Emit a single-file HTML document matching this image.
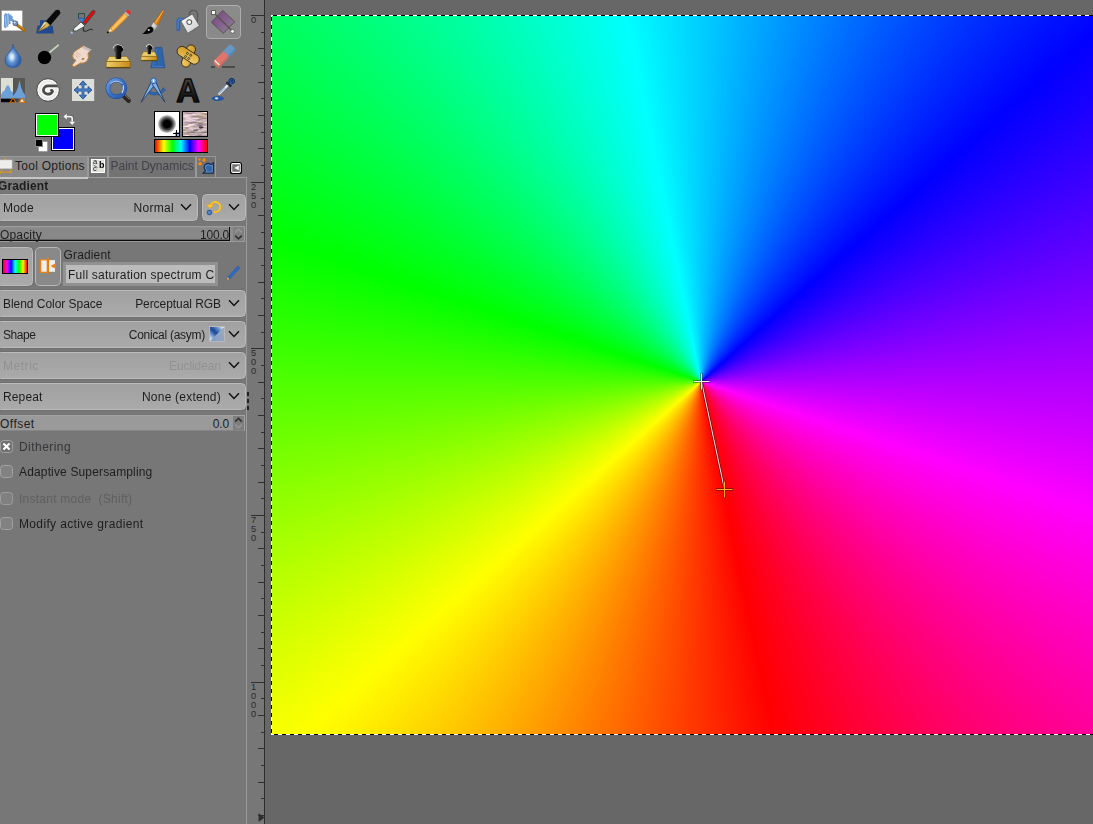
<!DOCTYPE html>
<html>
<head>
<meta charset="utf-8">
<title>GIMP</title>
<style>
html,body{margin:0;padding:0;}
body{width:1093px;height:824px;overflow:hidden;background:#777777;position:relative;font-family:"Liberation Sans","DejaVu Sans",sans-serif;font-size:12px;color:#1e1e1e;}
.abs{position:absolute;}
#canvasbg{left:265px;top:0;width:828px;height:824px;background:#676767;}
#rulerline{left:264px;top:0;width:1px;height:824px;background:#2e2e2e;}
#img{left:272px;top:16px;width:821px;height:718px;background:conic-gradient(from 168.4deg at 429px 365.5px,#ff0000,#ffff00,#00ff00,#00ffff,#0000ff,#ff00ff,#ff0000);}
#selT{left:271px;top:15px;width:822px;height:1px;background:repeating-linear-gradient(90deg,#fff 0 2px,#000 2px 6px,#fff 6px 8px);}
#selB{left:271px;top:734px;width:822px;height:1px;background:repeating-linear-gradient(90deg,#fff 0 3px,#000 3px 7px,#fff 7px 8px);}
#selL{left:271px;top:15px;width:1px;height:720px;background:repeating-linear-gradient(180deg,#fff 0 2px,#000 2px 6px,#fff 6px 8px);}
.tick{position:absolute;height:1px;background:#2e2e2e;}
.rl{position:absolute;left:249px;width:9px;font-size:9.4px;line-height:9px;color:#2a2a2a;text-align:center;}
.btn{position:absolute;height:27px;border-radius:4.5px;background:linear-gradient(#a1a1a1,#aaaaaa);border:1px solid #bbbbbb;box-shadow:0 0 0 1px rgba(0,0,0,0.05);box-sizing:border-box;}
.btn .l{position:absolute;left:3px;top:0;line-height:26px;white-space:nowrap;}
.btn .r{position:absolute;top:0;line-height:26px;white-space:nowrap;text-align:right;}
.dis{color:#919191;}
.chev{position:absolute;width:12px;height:8px;}
.cb{position:absolute;left:0;width:13px;height:13px;border-radius:3.5px;background:#828282;border:1px solid #a2a2a2;box-sizing:border-box;}
.cbl{position:absolute;left:19px;white-space:nowrap;line-height:14px;}
.spin{position:absolute;left:0;width:245px;height:16px;background:#8a8a8a;box-sizing:border-box;border-top:1px solid #6e6e6e;}
</style>
</head>
<body>
<!-- canvas area -->
<div id="canvasbg" class="abs"></div>
<div id="rulerline" class="abs"></div>
<div id="img" class="abs"></div>
<div id="selT" class="abs"></div>
<div id="selB" class="abs"></div>
<div id="selL" class="abs"></div>
<!-- gradient tool line -->
<svg class="abs" style="left:680px;top:360px" width="70" height="150" viewBox="680 360 70 150">
<line x1="701.5" y1="381.5" x2="724.5" y2="489.5" stroke="#000" stroke-width="2.4" opacity="0.55"/>
<line x1="701.5" y1="381.5" x2="724.5" y2="489.5" stroke="#e6e6e6" stroke-width="1.1"/>
<path d="M693 381.5H710M701.5 373V390" stroke="#000" stroke-width="2.6" opacity="0.5" fill="none"/>
<path d="M693.5 381.5H709.5M701.5 373.5V389.5" stroke="#f2f2f2" stroke-width="1.2" fill="none"/>
<path d="M716 489.5H733M724.5 481V498" stroke="#000" stroke-width="2.6" opacity="0.5" fill="none"/>
<path d="M716.5 489.5H732.5M724.5 481.5V497.5" stroke="#ffb020" stroke-width="1.2" fill="none"/>
</svg>
<!-- RULER -->
<div id="ruler">
<i class="tick" style="left:251px;top:15px;width:13px"></i>
<i class="tick" style="left:261px;top:32px;width:3px"></i>
<i class="tick" style="left:258px;top:48px;width:6px"></i>
<i class="tick" style="left:261px;top:65px;width:3px"></i>
<i class="tick" style="left:258px;top:82px;width:6px"></i>
<i class="tick" style="left:261px;top:98px;width:3px"></i>
<i class="tick" style="left:258px;top:115px;width:6px"></i>
<i class="tick" style="left:261px;top:132px;width:3px"></i>
<i class="tick" style="left:258px;top:148px;width:6px"></i>
<i class="tick" style="left:261px;top:165px;width:3px"></i>
<i class="tick" style="left:251px;top:182px;width:13px"></i>
<i class="tick" style="left:261px;top:198px;width:3px"></i>
<i class="tick" style="left:258px;top:215px;width:6px"></i>
<i class="tick" style="left:261px;top:232px;width:3px"></i>
<i class="tick" style="left:258px;top:248px;width:6px"></i>
<i class="tick" style="left:261px;top:265px;width:3px"></i>
<i class="tick" style="left:258px;top:282px;width:6px"></i>
<i class="tick" style="left:261px;top:298px;width:3px"></i>
<i class="tick" style="left:258px;top:315px;width:6px"></i>
<i class="tick" style="left:261px;top:332px;width:3px"></i>
<i class="tick" style="left:251px;top:348px;width:13px"></i>
<i class="tick" style="left:261px;top:365px;width:3px"></i>
<i class="tick" style="left:258px;top:382px;width:6px"></i>
<i class="tick" style="left:261px;top:398px;width:3px"></i>
<i class="tick" style="left:258px;top:415px;width:6px"></i>
<i class="tick" style="left:261px;top:432px;width:3px"></i>
<i class="tick" style="left:258px;top:448px;width:6px"></i>
<i class="tick" style="left:261px;top:465px;width:3px"></i>
<i class="tick" style="left:258px;top:482px;width:6px"></i>
<i class="tick" style="left:261px;top:498px;width:3px"></i>
<i class="tick" style="left:251px;top:515px;width:13px"></i>
<i class="tick" style="left:261px;top:532px;width:3px"></i>
<i class="tick" style="left:258px;top:548px;width:6px"></i>
<i class="tick" style="left:261px;top:565px;width:3px"></i>
<i class="tick" style="left:258px;top:582px;width:6px"></i>
<i class="tick" style="left:261px;top:598px;width:3px"></i>
<i class="tick" style="left:258px;top:615px;width:6px"></i>
<i class="tick" style="left:261px;top:632px;width:3px"></i>
<i class="tick" style="left:258px;top:648px;width:6px"></i>
<i class="tick" style="left:261px;top:665px;width:3px"></i>
<i class="tick" style="left:251px;top:682px;width:13px"></i>
<i class="tick" style="left:261px;top:698px;width:3px"></i>
<i class="tick" style="left:258px;top:715px;width:6px"></i>
<i class="tick" style="left:261px;top:732px;width:3px"></i>
<i class="tick" style="left:258px;top:748px;width:6px"></i>
<i class="tick" style="left:261px;top:765px;width:3px"></i>
<i class="tick" style="left:258px;top:782px;width:6px"></i>
<i class="tick" style="left:261px;top:798px;width:3px"></i>
<i class="tick" style="left:258px;top:815px;width:6px"></i>
<div class="rl" style="top:15px">0</div>
<div class="rl" style="top:182px">2<br>5<br>0</div>
<div class="rl" style="top:348px">5<br>0<br>0</div>
<div class="rl" style="top:515px">7<br>5<br>0</div>
<div class="rl" style="top:682px">1<br>0<br>0<br>0</div>
<svg class="abs" style="left:256px;top:812px" width="9" height="12" viewBox="0 0 9 12"><path d="M2.6 1.2L8.6 5.6L2.6 10Z" fill="#2e2e2e"/></svg>
</div>
<!-- LEFT PANEL -->
<div id="panel" class="abs" style="left:0;top:0;width:249px;height:824px;overflow:hidden;">
<svg class="abs" style="left:0;top:0" width="247" height="110" viewBox="0 0 247 110">
<defs>
<linearGradient id="gPurple" x1="0" y1="0" x2="1" y2="1"><stop offset="0" stop-color="#75407f"/><stop offset="1" stop-color="#93839a"/></linearGradient>
<linearGradient id="gGold" x1="0" y1="0" x2="1" y2="0"><stop offset="0" stop-color="#edcf6a"/><stop offset="1" stop-color="#c98a14"/></linearGradient>
<linearGradient id="gGold2" x1="0" y1="0" x2="1" y2="1"><stop offset="0" stop-color="#d2961f"/><stop offset="1" stop-color="#f0d070"/></linearGradient>
<linearGradient id="gPencil" x1="0" y1="0" x2="1" y2="1"><stop offset="0" stop-color="#e88a10"/><stop offset="0.5" stop-color="#fbb64a"/><stop offset="1" stop-color="#e88a10"/></linearGradient>
<radialGradient id="gDrop" cx="0.42" cy="0.55" r="0.6"><stop offset="0" stop-color="#eaf4ff"/><stop offset="0.16" stop-color="#cfe4fb"/><stop offset="0.42" stop-color="#6596d4"/><stop offset="0.75" stop-color="#3869ae"/><stop offset="1" stop-color="#2c5894"/></radialGradient>
<linearGradient id="gStampH" x1="0" y1="0" x2="1" y2="0"><stop offset="0" stop-color="#777"/><stop offset="0.45" stop-color="#111"/><stop offset="1" stop-color="#000"/></linearGradient>
<linearGradient id="gFerr" x1="0" y1="0" x2="1" y2="1"><stop offset="0" stop-color="#fff"/><stop offset="1" stop-color="#9a9a9a"/></linearGradient>
<linearGradient id="gBucket" x1="0" y1="0" x2="1" y2="1"><stop offset="0" stop-color="#ffffff"/><stop offset="1" stop-color="#c8c8c8"/></linearGradient>
<linearGradient id="gLev" x1="0" y1="0" x2="1" y2="0"><stop offset="0" stop-color="#000"/><stop offset="0.3" stop-color="#000"/><stop offset="1" stop-color="#888"/></linearGradient>
<linearGradient id="gZoom" x1="0" y1="0" x2="1" y2="1"><stop offset="0" stop-color="#6a9be0"/><stop offset="0.5" stop-color="#3a72c2"/><stop offset="1" stop-color="#2a5aa8"/></linearGradient>
<linearGradient id="gA" x1="0" y1="0" x2="0" y2="1"><stop offset="0" stop-color="#555"/><stop offset="0.5" stop-color="#222"/><stop offset="1" stop-color="#000"/></linearGradient>
<radialGradient id="gBrush"><stop offset="0" stop-color="#000"/><stop offset="0.55" stop-color="#000"/><stop offset="1" stop-color="#000" stop-opacity="0"/></radialGradient>
</defs>

<!-- 1: mypaint brush -->
<g>
<rect x="1.4" y="10.4" width="21.2" height="20.4" fill="#c4c4c4"/>
<rect x="2" y="11" width="20" height="19.2" fill="#fff"/>
<path d="M4.6 14.5V27.5M5.8 13V28.2M7 14V26.5M8.3 13.2V25M9.6 15V24M10.8 14.4V21M12 16V20.5" stroke="#5e93d4" stroke-width="1.1" fill="none"/>
<path d="M4.4 19L8 27M6.4 14L10.5 23.5M9 14L12.5 20.5" stroke="#6fa0dc" stroke-width="1" fill="none" opacity="0.9"/>
<path d="M5.2 16.5L6.2 26M7.6 15L8.6 24.5" stroke="#fff" stroke-width="0.5" fill="none" opacity="0.8"/>
<path d="M17.4 25.2L24.3 30.2" stroke="#a96606" stroke-width="3" stroke-linecap="round"/>
<path d="M17.6 24.6L24.2 29.4" stroke="#d9a04a" stroke-width="0.8"/>
<path d="M11.8 19.6L15 22.5" stroke="#6c9bd6" stroke-width="2.6" stroke-linecap="round"/>
<ellipse cx="15.4" cy="23.4" rx="2.5" ry="2.4" fill="#6d8db5" stroke="#3d4f66" stroke-width="0.7"/>
<circle cx="14.6" cy="22.6" r="1" fill="#dfe9f6"/>
</g>

<!-- 2: ink -->
<g>
<path d="M40 20.2H46.6V25.6H52.6L53.8 33.6H36.1L37.6 25.6H40Z" fill="#20498f"/>
<path d="M45.6 21.6L55.4 10.6Q57.8 8.8 59.6 10.6Q61 12.6 59.6 14.6L50.2 25.4Z" fill="#0a0a0a"/>
<path d="M49.6 15.4L55.6 9.6" stroke="#666" stroke-width="0.7" opacity="0.55"/>
<path d="M38.2 31.6L44.4 22L46.6 21.8L49.8 25L47.6 27.2Z" fill="#d3b25e" stroke="#7a5f1d" stroke-width="0.5"/>
<path d="M38.4 31.4L45.2 25" stroke="#5a4410" stroke-width="0.6"/>
<path d="M39.6 29.6L44.4 22.2L46.2 22.2Z" fill="#f4e7b8"/>
</g>

<!-- 3: airbrush -->
<g>
<path d="M83.4 26V31Q86.6 32 89.4 29.6Q91.4 28.6 92.8 30" stroke="#1a1a1a" stroke-width="1" fill="none" opacity="0.9"/>
<rect x="78.5" y="13.6" width="6" height="4.8" fill="#777" stroke="#2e4a4c" stroke-width="1"/>
<path d="M78.6 18.2H84.6L82 22.8Z" fill="#3b7fd6" stroke="#2a5aa0" stroke-width="0.5"/>
<path d="M82.6 22.6L92.4 10.6Q94.2 9.6 95 11.4Q95.2 12.4 94.6 13L85.4 24.6Z" fill="#f00606" stroke="#2e4a4c" stroke-width="0.9"/>
<path d="M81 22L85 26L83.2 27.2L76.4 31L73.4 31L73.8 28.4Z" fill="#f2f2ee" stroke="#2e4a4c" stroke-width="0.9" stroke-linejoin="round"/>
<path d="M73.6 30.8L72.2 31.8" stroke="#2e4a4c" stroke-width="0.9"/>
<rect x="70.8" y="31.6" width="2" height="2" fill="#a8c6ea"/>
</g>

<!-- 4: pencil -->
<g>
<path d="M110.2 28.2L124.2 13.2L128 16.6L113.2 31.2Z" fill="url(#gPencil)" stroke="#c7720a" stroke-width="0.6"/>
<path d="M111.8 29.6L126 15" stroke="#fde0a8" stroke-width="0.8" opacity="0.8"/>
<path d="M110.2 28.2L107.3 32.8L113.2 31.2Z" fill="#f3dcb0" stroke="#c7720a" stroke-width="0.5"/>
<path d="M107.3 32.8L108.2 31.2L109.2 32.3Z" fill="#000"/>
<circle cx="107.7" cy="32.4" r="0.8" fill="#000"/>
<path d="M124.2 13.2L125.8 11.6L129.6 15L128 16.6Z" fill="#b9b9b3"/>
<path d="M125.8 11.6Q127.4 9.2 129.6 10.4Q131.6 12.3 129.6 15Z" fill="#ee2a2a"/>
</g>

<!-- 5: paintbrush -->
<g>
<path d="M153.6 22.4L163 10Q164.4 9.6 164.2 11L157.6 26Z" fill="#e2830f" stroke="#a85d05" stroke-width="0.5"/>
<path d="M155.2 23.4L163.2 10.8" stroke="#f7b560" stroke-width="0.9"/>
<path d="M157 24.6L163.6 11.4" stroke="#b36205" stroke-width="0.7" opacity="0.7"/>
<path d="M150.8 26.8L153.6 22.4L157.6 26L154.6 30Z" fill="url(#gFerr)" stroke="#8a8a8a" stroke-width="0.4"/>
<path d="M142.2 34Q146.5 30.5 147.4 28.2Q149.6 25.6 151.8 26.8Q154.4 28.6 152.8 31.4Q150 34.2 142.2 34Z" fill="#050505"/>
<circle cx="148.7" cy="30" r="1.1" fill="#cfcfcf"/>
</g>

<!-- 6: bucket fill -->
<g>
<path d="M178.3 29.3V21.3Q178.3 19.6 180 19.6H186" stroke="#2f62ad" stroke-width="3.8" fill="none" stroke-linecap="round"/>
<path d="M178 29V21.3Q178 19.3 180 19.3H185" stroke="#4d82cc" stroke-width="1.2" fill="none" stroke-linecap="round"/>
<path d="M189.4 17V13.5Q189.8 10.4 193.4 10.4Q197.2 10.4 197.5 14V22" stroke="#565a56" stroke-width="1.3" fill="none"/>
<path d="M192.3 14L199.6 25.8L187.7 33.4L180.8 21Z" fill="url(#gBucket)" stroke="#5e5e5e" stroke-width="0.9" stroke-linejoin="round"/>
<circle cx="189.3" cy="22.1" r="2.4" fill="#f4f4f4" stroke="#5c605c" stroke-width="1.1"/>
</g>

<!-- 7: gradient (active) -->
<g>
<rect x="206.5" y="5.5" width="34" height="33" rx="3.5" fill="#8a8a8a" stroke="#adadad" stroke-width="1"/>
<path d="M222.7 10.4L234.7 21.8L223.3 33.4L211.4 22.2Z" fill="url(#gPurple)" stroke="#55534f" stroke-width="1" stroke-linejoin="round"/>
<path d="M214 13L232.3 31" stroke="#55534f" stroke-width="1.1"/>
<rect x="211.6" y="10.6" width="3.8" height="3.8" fill="#fff" stroke="#4a4a48" stroke-width="0.8"/>
<circle cx="232.5" cy="31.3" r="1.9" fill="#fff" stroke="#4a4a48" stroke-width="0.7"/>
</g>

<!-- row 2 -->
<!-- 8: blur drop -->
<g>
<path d="M13.1 44Q13.4 48.5 17.2 52.5Q21.4 56.8 21.2 60Q20.8 67.4 13.1 67.4Q5.4 67.4 5 60Q4.9 56.6 9 52.5Q12.8 48.5 13.1 44Z" fill="url(#gDrop)" stroke="#3262a6" stroke-width="1"/>
<path d="M13.1 44.5V47.5" stroke="#4a6a94" stroke-width="1"/>
</g>

<!-- 9: dodge/burn -->
<g>
<path d="M49.8 52.2L58.2 45.2" stroke="#6a7468" stroke-width="2.8" stroke-linecap="round"/>
<path d="M49.8 52.2L58.2 45.2" stroke="#c3cdbd" stroke-width="1.9" stroke-linecap="round"/>
<circle cx="44.5" cy="57.5" r="6.7" fill="#000"/>
</g>

<!-- 10: smudge -->
<g>
<path d="M83.5 45.8L91.3 49.2L88 53.5Q89.6 58.5 86.5 61.5Q83 63.8 80.6 63L74.6 66.6Q72.4 67.2 72.2 65L76 60.2Q73 59.5 72.6 56Q72.8 52 76.5 50.2Q80.5 47.5 83.5 45.8Z" fill="#efd9cd" stroke="#bf7b2b" stroke-width="0.9" stroke-linejoin="round"/>
<path d="M83.5 45.6L91.5 49.2L89.5 51.5L82 48Z" fill="#b9b9b9" opacity="0.85"/>
<path d="M84.5 45.4L91.8 48.8" stroke="#7c7c7c" stroke-width="1.4"/>
<path d="M74.5 54.5L78 58M75.5 52.8L79.5 57M77 51.5L80.8 55.5" stroke="#d89a78" stroke-width="0.6"/>
<path d="M81.5 59.5Q83 57.2 84.6 58.5Q83.5 60.2 81.5 59.5Z" fill="#a8650f"/>
</g>

<!-- 11: clone stamp -->
<g>
<path d="M106.3 67.6H130.2" stroke="#2a2008" stroke-width="1.2"/>
<path d="M109.4 56.4H126.8L130.2 61.7H106.2Z" fill="#ebcf6e" stroke="#7d5b0c" stroke-width="0.6"/>
<rect x="106.2" y="61.7" width="24" height="5.5" fill="url(#gGold)" stroke="#7d5b0c" stroke-width="0.6"/>
<path d="M115.4 58.6V52.5Q112.6 49.5 113.2 47.2Q114.3 44.3 118.2 44.3Q122.4 44.3 123.4 47.4Q123.8 50 121.2 52.6V58.6Q118.3 59.6 115.4 58.6Z" fill="url(#gStampH)"/>
<path d="M113.4 48.5Q113.6 44.8 118 44.6Q122.6 44.6 123.4 48.5" stroke="#e8e8e8" stroke-width="0.9" fill="none"/>
</g>

<!-- 12: perspective clone -->
<g>
<path d="M155.7 47.3H161.8L165 67.8H150.5Z" fill="#2f63aa" stroke="#234f8f" stroke-width="0.6"/>
<path d="M156.8 49L152.6 66.5H163.4" stroke="#5a8bd0" stroke-width="0.7" fill="none" opacity="0.7"/>
<path d="M141.2 60.6H157" stroke="#2a2008" stroke-width="1"/>
<path d="M143.6 51.8H154.6L157 56.3H141Z" fill="#ebcf6e" stroke="#7d5b0c" stroke-width="0.5"/>
<rect x="141" y="56.3" width="16" height="3.9" fill="url(#gGold)" stroke="#7d5b0c" stroke-width="0.5"/>
<path d="M147.6 54V50.2Q145.8 48.2 146.2 46.6Q147 44.4 149.2 44.4Q151.8 44.4 152.6 46.6Q152.9 48.4 150.8 50.4V54Q149.2 54.6 147.6 54Z" fill="url(#gStampH)"/>
<path d="M146.2 47Q146.6 44.6 149.2 44.5Q152 44.6 152.8 47.6" stroke="#e8e8e8" stroke-width="0.9" fill="none"/>
</g>

<!-- 13: heal -->
<g>
<g transform="rotate(111 188.5 56)"><rect x="177" y="51.6" width="23" height="8.8" rx="4.3" fill="url(#gGold2)" stroke="#2c2209" stroke-width="0.8"/></g>
<g transform="rotate(33 188.2 55.3)"><rect x="176" y="50.5" width="24.4" height="9.6" rx="4.6" fill="url(#gGold2)" stroke="#2c2209" stroke-width="0.8"/></g>
<circle cx="187.4" cy="53.4" r="1" fill="#b9b39a" stroke="#2c2209" stroke-width="0.7"/>
<circle cx="190.7" cy="55.3" r="1" fill="#b9b39a" stroke="#2c2209" stroke-width="0.7"/>
<circle cx="185.5" cy="56.6" r="1" fill="#b9b39a" stroke="#2c2209" stroke-width="0.7"/>
<circle cx="188.7" cy="58.5" r="1" fill="#b9b39a" stroke="#2c2209" stroke-width="0.7"/>
</g>

<!-- 14: eraser -->
<g>
<rect x="211" y="66" width="4" height="2" fill="#4b4d47"/>
<rect x="222" y="66" width="13" height="2" fill="#4b4d47"/>
<path d="M223.4 51L230.2 44L235.2 48.6L235 51.2L228.3 57.8Z" fill="#6699c6"/>
<path d="M235.2 48.6L235 51.2L228.3 57.8L228.1 55.6Z" fill="#5585b3"/>
<path d="M223.4 51L228.1 55.6L228.3 57.8L218.6 67.9L213.9 63.8L214.2 60.6Z" fill="#df766b"/>
<path d="M228.1 55.6L228.3 57.8L218.6 67.9L218.8 65.4Z" fill="#cf6a60"/>
<path d="M215 59.8L219.9 64.4L219 65.6L214.4 61.2Z" fill="#f3e9df"/>
</g>

<!-- row 3 -->
<!-- 15: levels -->
<g>
<rect x="1" y="78" width="12" height="20.5" fill="#dcdfd4"/>
<rect x="13" y="78" width="12" height="20.5" fill="#555753"/>
<path d="M1 98.5V95L3 91L4 91.5L6 87Q8 83.5 9.6 87L11 91L13 92V98.5Z" fill="#6d9fd8"/>
<path d="M13 98.5V96L16 92L18 87L19.6 80L21 87L23 92L25 95V98.5Z" fill="#6d9fd8"/>
<rect x="1" y="98.6" width="24" height="3.6" fill="url(#gLev)"/>
<path d="M10.2 102.2L13 98L15.8 102.2Z" fill="#000" stroke="#d86a08" stroke-width="1.1" stroke-linejoin="round"/>
<path d="M19.2 102.2L22 98L24.8 102.2Z" fill="#fff" stroke="#d86a08" stroke-width="1.1" stroke-linejoin="round"/>
</g>

<!-- 16: GEGL -->
<g>
<circle cx="48.05" cy="89.95" r="11.3" fill="#f6f6f4" stroke="#3a3a38" stroke-width="0.9"/>
<circle cx="48.05" cy="89.95" r="8.4" fill="none" stroke="#e0e0de" stroke-width="1.6" opacity="0.6"/>
<path d="M61 85.9H48.1A4.7 4.1 0 1 0 52.7 91" fill="none" stroke="#4c4c4a" stroke-width="2.8" stroke-linecap="butt"/>
<path d="M52.7 91Q52.6 89.6 51 90.2" fill="none" stroke="#4c4c4a" stroke-width="2" stroke-linecap="round"/>
<path d="M57.3 82.8L62 84.4V87.4H57.6Z" fill="#777777"/>
</g>

<!-- 17: move -->
<g>
<rect x="72" y="79" width="22.2" height="22" fill="#dcdfd8"/>
<path d="M83 83V97M76 90H90" stroke="#2a5796" stroke-width="2.8"/>
<path d="M83 80.8L86.6 84.8H79.4ZM83 99.2L86.6 95.2H79.4ZM74 90L78 86.4V93.6ZM92 90L88 86.4V93.6Z" fill="#3f74b8" stroke="#2a5796" stroke-width="0.9" stroke-linejoin="round"/>
<path d="M83 83V97M76 90H90" stroke="#4a7fc4" stroke-width="1.4"/>
</g>

<!-- 18: zoom -->
<g>
<path d="M123 95.2L128.6 100.6" stroke="#2a2622" stroke-width="4.6" stroke-linecap="round"/>
<path d="M124.4 94.6L129.6 99.6" stroke="#8a8278" stroke-width="0.9"/>
<circle cx="116.4" cy="88.3" r="8.5" fill="none" stroke="#1f4f9c" stroke-width="4.6"/>
<circle cx="116.4" cy="88.3" r="8.5" fill="none" stroke="url(#gZoom)" stroke-width="3.6"/>
<path d="M110.6 83.4Q116.4 78.6 122.4 83.6" stroke="#b5d0f4" stroke-width="1.2" fill="none" opacity="0.75"/>
<path d="M123.2 85.4Q124.2 89.4 121.8 93" stroke="#dce9fa" stroke-width="1.2" fill="none" opacity="0.85"/>
</g>

<!-- 19: measure -->
<g>
<path d="M148.4 90.6Q155.5 94.8 161.8 90.4L163 87.6L165.6 89.8L163 92.4Q155.5 97.4 147.2 93Z" fill="#2f66b5" stroke="#1d4a8c" stroke-width="0.5"/>
<path d="M151.2 82L155.2 84.2L141.2 102.2Z" fill="#7db3ee" stroke="#1b3558" stroke-width="0.8" stroke-linejoin="round"/>
<path d="M155.8 82L152 84.2L164.9 102.2Z" fill="#7db3ee" stroke="#1b3558" stroke-width="0.8" stroke-linejoin="round"/>
<circle cx="153.5" cy="80.8" r="2.9" fill="#7db3ee" stroke="#2a5796" stroke-width="0.9"/>
<rect x="152.9" y="79.4" width="1.2" height="2.8" fill="#fff"/>
</g>

<!-- 20: text -->
<g>
<text x="188.1" y="101.7" font-family="Liberation Sans, DejaVu Sans, sans-serif" font-weight="bold" font-size="32.5" text-anchor="middle" fill="url(#gA)" stroke="#0c0c0c" stroke-width="1.5" stroke-linejoin="round">A</text>
</g>

<!-- 21: color picker -->
<g>
<ellipse cx="217.8" cy="98.5" rx="6" ry="2.5" fill="#2456a6"/>
<ellipse cx="216.6" cy="98.3" rx="1.7" ry="1.1" fill="#d6e2f2"/>
<path d="M228.2 84.8L219.2 93.8" stroke="#f2f2f2" stroke-width="2.2" stroke-linecap="round"/>
<path d="M224.6 87.8L219.4 93.2" stroke="#7fb0e8" stroke-width="1.2" stroke-linecap="round"/>
<path d="M227.2 82.8L230.4 85.8" stroke="#1c3048" stroke-width="2.6" stroke-linecap="round"/>
<circle cx="231.7" cy="81.1" r="2.8" fill="#2a5aa0" stroke="#1c3048" stroke-width="1"/>
<path d="M228.8 82.8L230.6 84.8L232.4 83Z" fill="#2a5aa0"/>
<circle cx="232" cy="80.8" r="1.2" fill="#163a78"/>
</g>
</svg>

<!-- color area -->
<div class="abs" style="left:51px;top:127px;width:24px;height:24px;background:#0000ff;border:1px solid #000;box-shadow:inset 0 0 0 1px #fff;box-sizing:border-box;"></div>
<div class="abs" style="left:35px;top:113px;width:24px;height:24px;background:#00ff00;border:1px solid #000;box-shadow:inset 0 0 0 1px #fff;box-sizing:border-box;"></div>
<div class="abs" style="left:39px;top:142px;width:8px;height:9px;background:#fff;box-shadow:0 0 0 0.5px #c8c8c8;"></div>
<div class="abs" style="left:36px;top:140px;width:6px;height:6px;background:#000;box-shadow:0 0 0 1px #8a8a8a;"></div>
<svg class="abs" style="left:60px;top:110px" width="20" height="20" viewBox="60 110 20 20">
<path d="M66.4 116.6H70.4Q72.2 116.6 72.2 118.4V121.6" stroke="#3c3c3c" stroke-width="3" fill="none" opacity="0.45"/>
<path d="M63.2 116.6L67 113.2V120ZM72.2 125.2L68.8 121.4H75.6Z" fill="#f6f6f6" stroke="#4a4a4a" stroke-width="0.5" stroke-opacity="0.6"/>
<path d="M66.4 116.6H70.4Q72.2 116.6 72.2 118.4V121.8" stroke="#f6f6f6" stroke-width="1.7" fill="none"/>
</svg>
<!-- brush / pattern / gradient -->
<div class="abs" style="left:154px;top:111px;width:26px;height:26px;background:#fff;border:1px solid #000;box-sizing:border-box;overflow:hidden;">
 <div class="abs" style="left:3px;top:3px;width:18px;height:18px;border-radius:50%;background:radial-gradient(circle,#000 0,#000 28%,rgba(0,0,0,0.72) 46%,rgba(0,0,0,0.28) 66%,rgba(0,0,0,0) 90%);"></div>
 <div class="abs" style="left:20px;top:20px;width:5px;height:5px;background:#8fa9f5;"></div>
 <div class="abs" style="left:18px;top:21px;width:6px;height:1px;background:#000;"></div>
 <div class="abs" style="left:21px;top:18px;width:1px;height:7px;background:#000;"></div>
</div>
<div class="abs" style="left:182px;top:111px;width:26px;height:26px;border:1px solid #000;box-sizing:border-box;overflow:hidden;background:#cdbcb9;">
<svg width="24" height="24" viewBox="0 0 24 24" style="display:block">
<defs><filter id="marble" x="0" y="0" width="100%" height="100%" color-interpolation-filters="sRGB"><feTurbulence type="fractalNoise" baseFrequency="0.08 0.5" numOctaves="3" seed="7"/><feColorMatrix type="matrix" values="1.05 0.05 0 0 0.22  0.95 0.15 0 0 0.14  0.95 0 0.15 0 0.15  0 0 0 0 1"/></filter></defs>
<rect width="24" height="24" fill="#cbb9b6"/>
<rect width="24" height="24" filter="url(#marble)"/>
<path d="M12 1H24V6H12Z" fill="#c9b58f" opacity="0.35"/>
<ellipse cx="18" cy="15.5" rx="2.2" ry="0.9" fill="#2f2522" opacity="0.9"/>
<ellipse cx="12.5" cy="18.4" rx="2.6" ry="0.9" fill="#5e5955" opacity="0.8"/>
<ellipse cx="4" cy="16" rx="2" ry="0.7" fill="#8a7c7c" opacity="0.7"/>
</svg>
</div>
<div class="abs" style="left:154px;top:139px;width:54px;height:14px;border:1px solid #000;box-sizing:border-box;background:linear-gradient(90deg,#ff0000,#ffff00,#00ff00,#00ffff,#0000ff,#ff00ff,#ff0000);"></div>

<!-- tabs -->
<div class="abs" style="left:0;top:177px;width:247px;height:1px;background:#9d9d9d;"></div>
<div class="abs" style="left:246px;top:177px;width:1px;height:647px;background:#9a9a9a;"></div>
<div class="abs" style="left:0;top:156px;width:216px;height:21px;background:#737373;"></div>
<div class="abs" style="left:0;top:156px;width:216px;height:1px;background:#9a9a9a;"></div>
<div class="abs" style="left:0;top:157px;width:87px;height:20px;background:#8a8a8a;"></div>
<div class="abs" style="left:87px;top:156px;width:2px;height:21px;background:#999;"></div>
<div class="abs" style="left:107px;top:156px;width:2px;height:21px;background:#999;"></div>
<div class="abs" style="left:195px;top:156px;width:2px;height:21px;background:#999;"></div>
<div class="abs" style="left:215px;top:156px;width:1px;height:21px;background:#999;"></div>
<div class="abs" style="left:0;top:177px;width:88px;height:2px;background:#c6c6c6;"></div>
<!-- easel icon -->
<svg class="abs" style="left:0;top:156px" width="16" height="20" viewBox="0 156 16 20">
<path d="M4.6 157.6H6.4V160H4.6Z" fill="#d8941f"/>
<path d="M2.2 169L0.4 173.4M9.8 169L11.8 173.6M0 172.2H11" stroke="#d8941f" stroke-width="1.3" fill="none"/>
<rect x="-1" y="160" width="13" height="8.6" fill="#eeeeec" stroke="#c9c9c4" stroke-width="0.6"/>
</svg>
<div id="t_to" class="abs" style="letter-spacing:0.26px;left:15px;top:159px;line-height:15px;white-space:nowrap;">Tool Options</div>
<!-- ab icon -->
<div class="abs" style="left:91px;top:159px;width:14px;height:14px;background:#dfe2db;border:1px solid #fff;box-sizing:border-box;"></div>
<div class="abs" style="left:93px;top:158px;font-size:7.5px;line-height:8px;color:#111;will-change:transform;">a</div>
<div class="abs" style="left:93px;top:165px;font-size:7.5px;line-height:8px;color:#111;will-change:transform;">c</div>
<div class="abs" style="left:99px;top:159px;font-size:9px;line-height:12px;font-weight:bold;color:#000;will-change:transform;">b</div>
<svg class="abs" style="left:92px;top:160px" width="8" height="12" viewBox="0 0 8 12"><path d="M1.6 5.2L5.4 7.4" stroke="#222" stroke-width="0.6"/></svg>
<div id="t_pd" class="abs" style="left:110.5px;top:159px;line-height:15px;white-space:nowrap;color:#41414a;">Paint Dynamics</div>
<!-- tab4 icon -->
<svg class="abs" style="left:196px;top:156px" width="22" height="20" viewBox="196 156 22 20">
<circle cx="199.4" cy="159.4" r="1.2" fill="#ff8c00"/><circle cx="204" cy="160" r="1.7" fill="#ff8c00"/><circle cx="200" cy="163.8" r="1.8" fill="#ff8c00"/>
<path d="M213.4 162.6V173.1H202.8L205.6 170.9Q202.8 167.2 205.2 164.6Q208.2 162.2 211.2 164.6Z" fill="#3465a4" stroke="#15294a" stroke-width="1.1" stroke-linejoin="round"/>
<path d="M212.4 164.8V172.1H205.6L207 171Q204.2 167.4 206 165.4Q208.4 163.6 210.8 165.9Z" fill="none" stroke="#7ea8de" stroke-width="0.6" stroke-linejoin="round"/>
</svg>
<!-- menu button -->
<svg class="abs" style="left:229px;top:161px" width="14" height="14" viewBox="229 161 14 14">
<rect x="230.6" y="162.5" width="10.8" height="11" rx="2" fill="#fff" stroke="#000" stroke-width="1.2"/>
<rect x="232.2" y="164.2" width="7.6" height="7.6" fill="#747474"/>
<path d="M234.3 167.9L238.8 165.5V170.3Z" fill="#fff"/>
</svg>

<!-- options -->
<div id="t_gr" class="abs" style="letter-spacing:0.12px;left:-2px;top:179px;font-weight:bold;line-height:15px;white-space:nowrap;">Gradient</div>

<div class="btn" style="left:-4px;top:194px;width:202px;"><span id="t_mode" class="l" style="letter-spacing:0.19px;left:6px">Mode</span><span id="t_normal" class="r" style="letter-spacing:0.30px;right:23px">Normal</span>
<svg class="chev" style="right:5px;top:8px" viewBox="0 0 12 8"><path d="M1 1.2L6 6.4L11 1.2" stroke="#111" stroke-width="1.5" fill="none"/></svg></div>
<div class="btn" style="left:202px;top:194px;width:44px;">
<svg class="abs" style="left:0px;top:3px" width="20" height="20" viewBox="203 198 20 20">
<path d="M210.4 205.6A5 5 0 1 1 214.4 211.9" stroke="#f0a010" stroke-width="2.3" fill="none" stroke-linecap="round" opacity="0.55"/>
<path d="M210.4 205.6A5 5 0 1 1 214.4 211.9" stroke="#fcc81a" stroke-width="1.7" fill="none" stroke-linecap="round"/>
<path d="M205.8 204.6H214.2L210 208.8Z" fill="#f9a613"/>
<path d="M207.6 205.2H212.4L210 207.6Z" fill="#fdd835"/>
<circle cx="209.4" cy="212.5" r="2.4" fill="#2f63ad" stroke="#1f4a8c" stroke-width="0.6"/>
<path d="M208.2 212H210.6M208.6 213.2H210.2" stroke="#bcd2ee" stroke-width="0.6"/>
</svg>
<svg class="chev" style="right:5px;top:8px" viewBox="0 0 12 8"><path d="M1 1.2L6 6.4L11 1.2" stroke="#111" stroke-width="1.5" fill="none"/></svg></div>

<!-- opacity -->
<div class="abs" style="left:-2px;top:226px;width:247px;height:16px;background:#8e8e8e;border:1px solid #9b9b9b;box-sizing:border-box;"></div>
<div class="abs" style="left:0;top:227px;width:229px;height:13px;background:#888888;border-top:1px solid #8f8f8f;box-sizing:border-box;"></div>
<div class="abs" style="left:0;top:240px;width:230px;height:1px;background:#0a0a0a;"></div>
<div class="abs" style="left:0;top:239px;width:230px;height:1px;background:#0a0a0a;opacity:0.3;"></div>
<div class="abs" style="left:229px;top:227px;width:1px;height:14px;background:#0a0a0a;"></div>
<div id="t_op" class="abs" style="letter-spacing:0.16px;left:0;top:228px;line-height:15px;white-space:nowrap;">Opacity</div>
<div id="t_100" class="abs" style="letter-spacing:-0.21px;right:20px;top:228px;line-height:15px;white-space:nowrap;">100.0</div>
<div class="abs" style="left:233px;top:227px;width:11px;height:14px;background:#808080;"></div>
<svg class="abs" style="left:232px;top:227px" width="13" height="14" viewBox="0 0 13 14"><path d="M3.2 5.4L6.5 2.2L9.8 5.4" stroke="#969696" stroke-width="1.6" fill="none"/><path d="M3.2 8.6L6.5 11.8L9.8 8.6" stroke="#333" stroke-width="1.7" fill="none"/></svg>

<!-- gradient chooser -->
<div class="btn" style="left:-4px;top:247px;width:37px;height:39px;"></div>
<div class="abs" style="left:2px;top:259px;width:26px;height:15px;border:1px solid #000;box-sizing:border-box;background:linear-gradient(90deg,#ff0000,#ff00ff,#0000ff,#00ffff,#00ff00,#ffff00,#ff0000);"></div>
<div class="abs" style="left:35px;top:247px;width:26px;height:39px;border-radius:5px;background:#898989;border:1px solid #b7b7b7;box-sizing:border-box;"></div>
<svg class="abs" style="left:38px;top:256px" width="20" height="20" viewBox="38 256 20 20">
<rect x="49" y="260.1" width="6" height="11.7" fill="#efefef"/>
<rect x="40.7" y="259.8" width="6.6" height="12.5" fill="#efefef" stroke="#f0800e" stroke-width="1.2"/>
<rect x="47.2" y="258" width="1.7" height="15.8" fill="#ee7a08"/>
<path d="M50.5 266L56 262.9V269Z" fill="#f0800e"/>
</svg>
<div id="t_g2" class="abs" style="letter-spacing:0.15px;left:63.5px;top:248px;line-height:15px;white-space:nowrap;">Gradient</div>
<div class="abs" style="left:63px;top:262px;width:155px;height:24px;background:#919191;"></div>
<div class="abs" style="left:66px;top:265px;width:149px;height:18px;background:#bcbcbc;overflow:hidden;"><span id="t_fs" style="letter-spacing:0.24px;position:absolute;left:2px;top:3px;line-height:15px;white-space:nowrap;">Full saturation spectrum CCW</span></div>
<svg class="abs" style="left:224px;top:263px" width="20" height="20" viewBox="224 263 20 20">
<path d="M227.6 277.2L237.8 266L239.9 267.9L229.6 279.2Z" fill="#2d6cc4" stroke="#2458a5" stroke-width="0.5"/>
<path d="M227.6 277.2L226 280L229.6 279.2Z" fill="#e0a050"/>
<path d="M226 280L226.5 279.1L227.1 279.7Z" fill="#333"/>
</svg>

<div class="btn" style="left:-4px;top:290px;width:250px;"><span id="t_bcs" class="l" style="letter-spacing:-0.04px;left:6px">Blend Color Space</span><span id="t_prgb" class="r" style="letter-spacing:-0.06px;right:24px">Perceptual RGB</span>
<svg class="chev" style="right:5px;top:8px" viewBox="0 0 12 8"><path d="M1 1.2L6 6.4L11 1.2" stroke="#111" stroke-width="1.5" fill="none"/></svg></div>

<div class="btn" style="left:-4px;top:321px;width:250px;"><span id="t_shape" class="l" style="letter-spacing:-0.42px;left:6px">Shape</span><span id="t_con" class="r" style="letter-spacing:-0.27px;right:40px">Conical (asym)</span>
<div class="abs" style="left:212px;top:4px;width:16px;height:16px;box-sizing:border-box;border:1px solid #b8b8b8;background:linear-gradient(to bottom left,#a5aab3,#7b9dcc);"><div style="position:absolute;left:0;top:0;width:14px;height:14px;clip-path:polygon(0 0,100% 0,0 100%);background:linear-gradient(to bottom left,#ffffff 2%,#6f95cc 25%,#1f4f9a 47%,#24539d 55%,#8fb0dd 78%,#ffffff 98%);"></div></div>
<svg class="chev" style="right:5px;top:8px" viewBox="0 0 12 8"><path d="M1 1.2L6 6.4L11 1.2" stroke="#111" stroke-width="1.5" fill="none"/></svg></div>

<div class="btn" style="left:-4px;top:352px;width:250px;"><span id="t_metric" class="l dis" style="letter-spacing:0.54px;left:6px">Metric</span><span id="t_euc" class="r dis" style="letter-spacing:-0.08px;right:24px">Euclidean</span>
<svg class="chev" style="right:5px;top:8px" viewBox="0 0 12 8"><path d="M1 1.2L6 6.4L11 1.2" stroke="#111" stroke-width="1.5" fill="none"/></svg></div>

<div class="btn" style="left:-4px;top:383px;width:250px;"><span id="t_repeat" class="l" style="letter-spacing:0.13px;left:6px">Repeat</span><span id="t_none" class="r" style="letter-spacing:0.23px;right:24px">None (extend)</span>
<svg class="chev" style="right:5px;top:8px" viewBox="0 0 12 8"><path d="M1 1.2L6 6.4L11 1.2" stroke="#111" stroke-width="1.5" fill="none"/></svg></div>
<div class="abs" style="left:247px;top:392px;width:2px;height:4px;background:#222;"></div>
<div class="abs" style="left:247px;top:399px;width:2px;height:4px;background:#222;"></div>
<div class="abs" style="left:247px;top:406px;width:2px;height:4px;background:#222;"></div>

<!-- offset -->
<div class="abs" style="left:-2px;top:415px;width:247px;height:16px;background:#9a9a9a;border:1px solid #a2a2a2;border-bottom-color:#858585;box-sizing:border-box;"></div>
<div id="t_of" class="abs" style="letter-spacing:0.47px;left:0;top:417px;line-height:15px;white-space:nowrap;">Offset</div>
<div id="t_00" class="abs" style="letter-spacing:-0.16px;right:20px;top:417px;line-height:15px;white-space:nowrap;">0.0</div>
<div class="abs" style="left:233px;top:416px;width:11px;height:14px;background:#7e7e7e;"></div>
<svg class="abs" style="left:232px;top:416px" width="13" height="14" viewBox="0 0 13 14"><path d="M3.2 5.6L6.5 2.4L9.8 5.6" stroke="#333" stroke-width="1.7" fill="none"/><path d="M3.2 8.6L6.5 11.8L9.8 8.6" stroke="#939393" stroke-width="1.6" fill="none"/></svg>

<!-- checkboxes -->
<div class="cb" style="top:440px;background:#707070;"></div>
<svg class="abs" style="left:0;top:440px" width="13" height="13" viewBox="0 0 13 13"><path d="M3.4 3.4L9.6 9.6M9.6 3.4L3.4 9.6" stroke="#fff" stroke-width="2.1"/></svg>
<div id="t_di" class="cbl" style="letter-spacing:0.45px;top:440px;color:#36363a;">Dithering</div>
<div class="cb" style="top:465px;"></div>
<div id="t_as" class="cbl" style="letter-spacing:0.15px;top:465px;">Adaptive Supersampling</div>
<div class="cb" style="top:492px;border-color:#9c9c9c;background:#808080;"></div>
<div id="t_im" class="cbl" style="letter-spacing:0.25px;top:492px;color:#5f5f5f;">Instant mode&nbsp; (Shift)</div>
<div class="cb" style="top:517px;"></div>
<div id="t_ma" class="cbl" style="letter-spacing:0.35px;top:517px;">Modify active gradient</div>

</div>
</body>
</html>
